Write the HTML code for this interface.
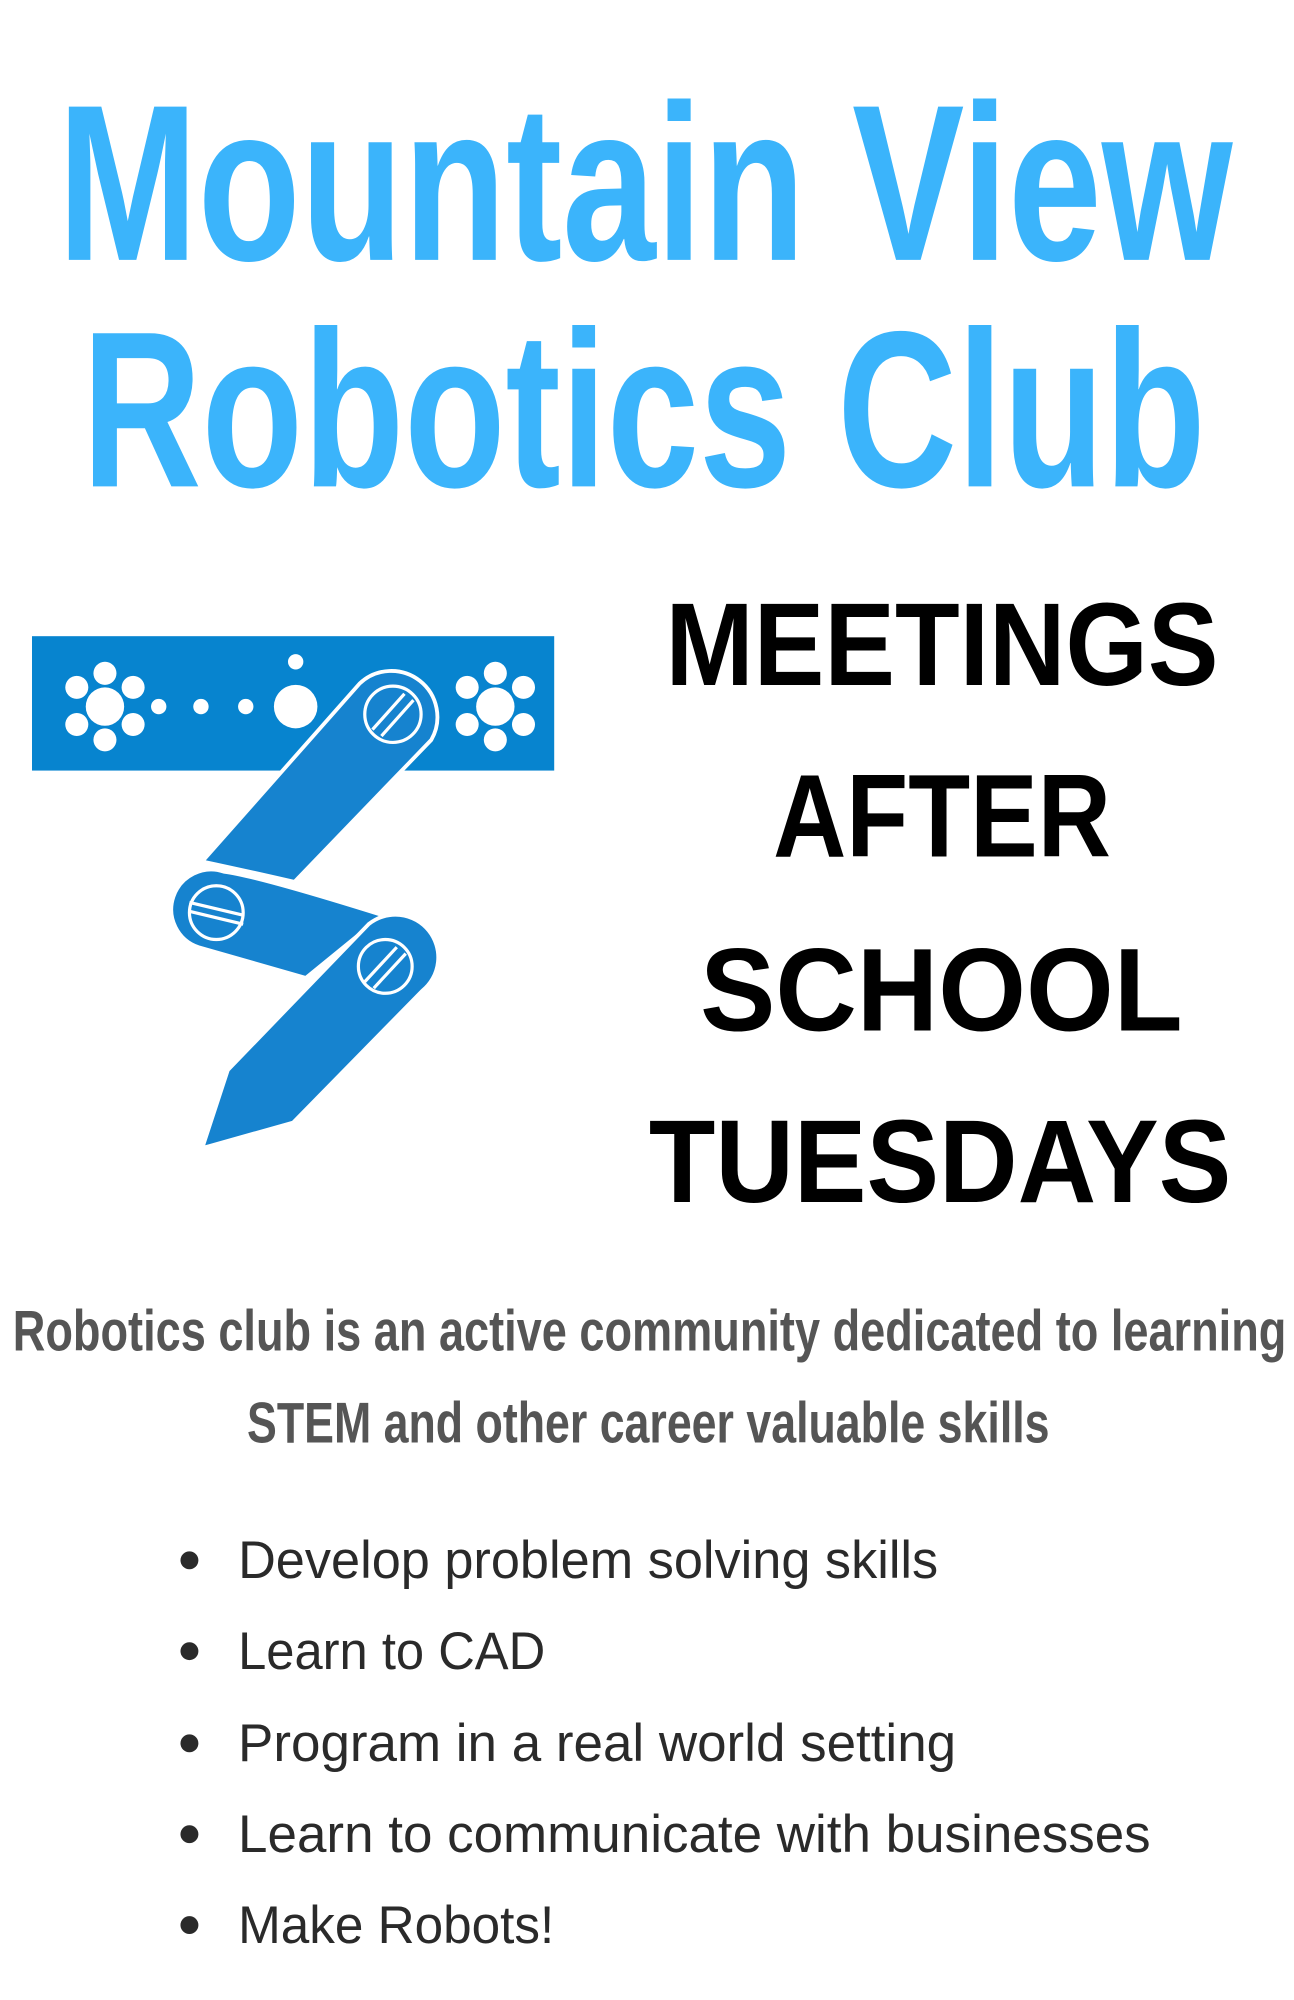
<!DOCTYPE html>
<html><head><meta charset="utf-8"><style>
html,body{margin:0;padding:0;background:#fff;width:1294px;height:2000px;overflow:hidden}
svg{display:block}
</style></head><body>
<svg width="1294" height="2000" viewBox="0 0 1011 1562.5" xmlns="http://www.w3.org/2000/svg">
<g font-family="Liberation Sans, sans-serif" font-weight="bold" fill="#3BB4FB">
<text x="45" y="203" font-size="174" textLength="918" lengthAdjust="spacingAndGlyphs">Mountain View</text>
<text x="64" y="380" font-size="174" textLength="878" lengthAdjust="spacingAndGlyphs">Robotics Club</text>
</g>
<g font-family="Liberation Sans, sans-serif" font-weight="bold" fill="#000" font-size="92">
<text x="520" y="535" textLength="432" lengthAdjust="spacingAndGlyphs">MEETINGS</text>
<text x="604" y="669" textLength="264" lengthAdjust="spacingAndGlyphs">AFTER</text>
<text x="547" y="805" textLength="377" lengthAdjust="spacingAndGlyphs">SCHOOL</text>
<text x="507" y="939" textLength="455" lengthAdjust="spacingAndGlyphs">TUESDAYS</text>
</g>
<g font-family="Liberation Sans, sans-serif" font-weight="bold" fill="#555" font-size="45">
<text x="10" y="1055" textLength="995" lengthAdjust="spacingAndGlyphs">Robotics club is an active community dedicated to learning</text>
<text x="193" y="1127" textLength="627" lengthAdjust="spacingAndGlyphs">STEM and other career valuable skills</text>
</g>
<g font-family="Liberation Sans, sans-serif" fill="#2a2a2a" font-size="41">
<circle cx="148" cy="1219" r="7"/><text x="186" y="1233" textLength="547" lengthAdjust="spacingAndGlyphs">Develop problem solving skills</text>
<circle cx="148" cy="1290" r="7"/><text x="186" y="1304" textLength="240" lengthAdjust="spacingAndGlyphs">Learn to CAD</text>
<circle cx="148" cy="1362" r="7"/><text x="186" y="1376" textLength="561" lengthAdjust="spacingAndGlyphs">Program in a real world setting</text>
<circle cx="148" cy="1433" r="7"/><text x="186" y="1447" textLength="713" lengthAdjust="spacingAndGlyphs">Learn to communicate with businesses</text>
<circle cx="148" cy="1504" r="7"/><text x="186" y="1518" textLength="247" lengthAdjust="spacingAndGlyphs">Make Robots!</text>
</g>
<rect x="25" y="497" width="408" height="105" fill="#0784CF"/>
<g fill="#fff">
<circle cx="82" cy="552" r="15"/>
<circle cx="82" cy="526" r="9"/><circle cx="60" cy="537" r="9"/><circle cx="104" cy="537" r="9"/>
<circle cx="60" cy="566" r="9"/><circle cx="104" cy="566" r="9"/><circle cx="82" cy="578" r="9"/>
<circle cx="387" cy="552" r="15"/>
<circle cx="387" cy="526" r="9"/><circle cx="365" cy="537" r="9"/><circle cx="409" cy="537" r="9"/>
<circle cx="365" cy="566" r="9"/><circle cx="409" cy="566" r="9"/><circle cx="387" cy="578" r="9"/>
<circle cx="124" cy="552" r="6"/><circle cx="157" cy="552" r="6"/><circle cx="192" cy="552" r="6"/>
<circle cx="231" cy="552" r="17"/><circle cx="231" cy="517" r="6"/>
</g>
<g fill="#1683CF" stroke="#fff" stroke-width="3" stroke-linejoin="round">
<path d="M281,534 A36,36 0 0 1 337,578 L230,689 Q200,682 158,673 Z"/>
<path d="M175,681 Q200,684 299,715 L239,764 L155,740 A31,31 0 0 1 175,681 Z"/>
<path d="M288,722 A32,32 0 0 1 330,774 L229,877 L158,897 L178,836 Z"/>
</g>
<g fill="none" stroke="#fff" stroke-width="2.5">
<circle cx="307" cy="558" r="22"/><path d="M291,570 L316,542 M298,575 L323,547"/>
<circle cx="169" cy="713" r="21"/><path d="M148,705 L190,715 M148,712 L190,722"/>
<circle cx="301" cy="755" r="21"/><path d="M285,767 L310,740 M292,772 L317,745"/>
</g>
</svg>
</body></html>
